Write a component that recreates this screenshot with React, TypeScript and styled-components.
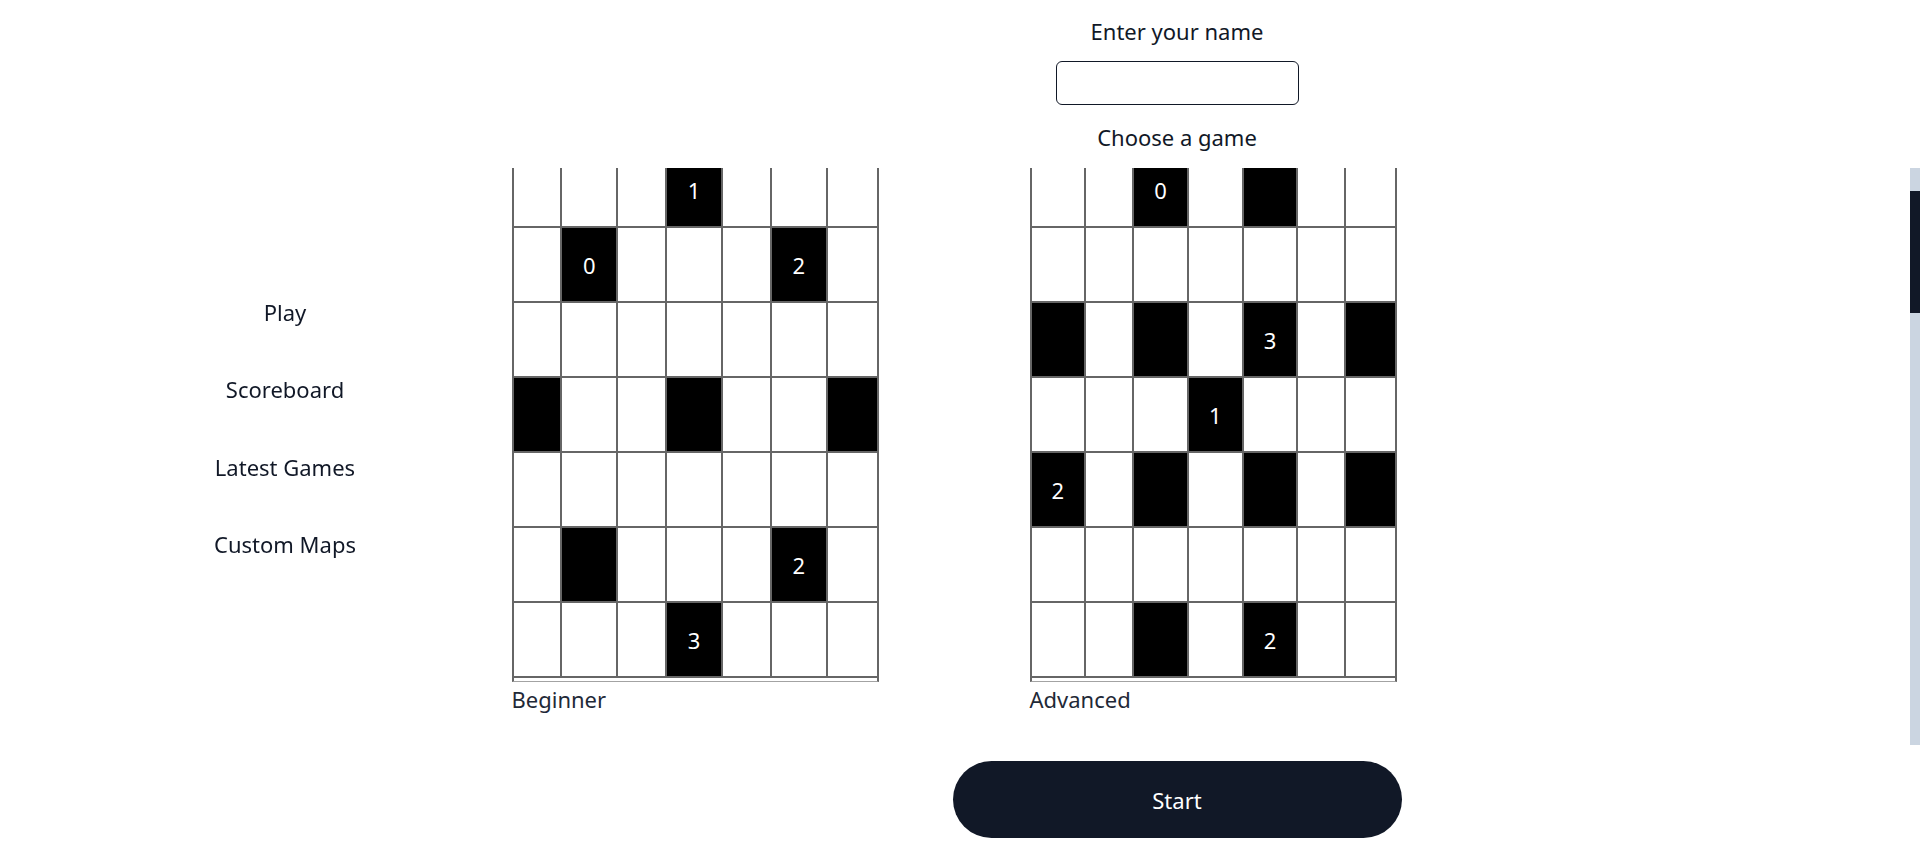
import React, { useCallback, useLayoutEffect, useRef, useState } from 'react';
import styled, { createGlobalStyle } from 'styled-components';

const GlobalStyle = createGlobalStyle`
  html, body {
    margin: 0;
    padding: 0;
    background: #ffffff;
    overflow: hidden;
  }
  body {
    font-family: "Noto Sans", "Open Sans", sans-serif;
    color: #111827;
  }
`;

// '.' = white cell, '#' = black cell, digit = black cell with a number
type GameMap = { name: string; rows: string[] };

const maps: GameMap[] = [
  {
    name: 'Beginner',
    rows: ['...1...', '.0...2.', '.......', '#..#..#', '.......', '.#...2.', '...3...'],
  },
  {
    name: 'Advanced',
    rows: ['..0.#..', '.......', '#.#.3.#', '...1...', '2.#.#.#', '.......', '..#.2..'],
  },
];

const TRACK_WIDTH = 10;

const Page = styled.div`
  display: flex;
  flex-direction: column;
`;

const Header = styled.header`
  display: flex;
  flex-direction: column;
  align-items: center;
  padding: 17px 0 0 434px;
`;

const Label = styled.div<{ $gap?: number }>`
  font-size: 22px;
  line-height: 28px;
  margin-top: ${(p) => p.$gap ?? 0}px;
`;

const NameInput = styled.input`
  box-sizing: border-box;
  width: 243px;
  height: 44px;
  margin-top: 16px;
  border: 1px solid #111827;
  border-radius: 6px;
  background: #ffffff;
  font-family: inherit;
  font-size: 18px;
  padding: 0 10px;
  outline: none;
`;

const ScrollArea = styled.div`
  position: relative;
  margin-top: 17px;
`;

const MapScroller = styled.div`
  height: 577px;
  overflow-y: auto;
  overflow-x: hidden;
  scrollbar-width: none;

  &::-webkit-scrollbar {
    display: none;
  }
`;

const Track = styled.div`
  position: absolute;
  top: 0;
  right: 0;
  bottom: 0;
  width: ${TRACK_WIDTH}px;
  background: #cbd5e1;
`;

const Thumb = styled.div`
  position: absolute;
  left: 0;
  width: 100%;
  background: #111827;
`;

const MapList = styled.div`
  display: grid;
  grid-template-columns: repeat(2, 367px);
  justify-content: center;
  column-gap: 151px;
  padding: 92px 12px 2078px 0;
`;

const MapCard = styled.div`
  display: flex;
  flex-direction: column;
  cursor: pointer;
`;

const Frame = styled.div`
  box-sizing: border-box;
  width: 367px;
  border: 2px solid #666666;
  border-bottom: 1px solid #a3a3a3;
  padding-bottom: 3px;
`;

const Board = styled.div<{ $columns: string }>`
  display: grid;
  grid-template-columns: ${(p) => p.$columns};
  grid-auto-rows: 75px;
`;

const Cell = styled.div<{ $black: boolean; $last: boolean }>`
  box-sizing: border-box;
  display: flex;
  align-items: center;
  justify-content: center;
  border-bottom: 2px solid #666666;
  border-right: ${(p) => (p.$last ? 'none' : '2px solid #666666')};
  background: ${(p) => (p.$black ? '#000000' : '#ffffff')};
  color: #ffffff;
  font-size: 22px;
`;

const MapName = styled.div`
  padding-top: 3px;
  font-size: 22px;
  line-height: 28px;
  color: #1f2937;
`;

const Footer = styled.footer`
  display: flex;
  justify-content: center;
  padding-left: 434px;
  margin-top: 16px;
`;

const StartButton = styled.button`
  width: 449px;
  height: 77px;
  border: none;
  border-radius: 9999px;
  background: #111827;
  color: #ffffff;
  font-family: inherit;
  font-size: 22px;
  cursor: pointer;
`;

const Sidebar = styled.nav`
  position: fixed;
  top: 0;
  left: 0;
  width: 570px;
  height: 100vh;
  padding-top: 6px;
  box-sizing: border-box;
  display: flex;
  flex-direction: column;
  justify-content: center;
  align-items: center;
  gap: 49.5px;
  z-index: 2;
`;

const NavItem = styled.a`
  font-size: 22px;
  line-height: 28px;
  color: #111827;
  text-decoration: none;
  cursor: pointer;
`;

const columnTemplate = (rows: string[]) =>
  rows[0]
    .split('')
    .map((_, c) => (rows.some((r) => /\d/.test(r[c])) ? '1.14fr' : '1fr'))
    .join(' ');

const MapBoard = ({ map }: { map: GameMap }) => (
  <MapCard>
    <Frame>
      <Board $columns={columnTemplate(map.rows)}>
        {map.rows.map((row, r) =>
          row.split('').map((ch, c) => (
            <Cell key={`${r}-${c}`} $black={ch !== '.'} $last={c === row.length - 1}>
              {/\d/.test(ch) ? ch : null}
            </Cell>
          ))
        )}
      </Board>
    </Frame>
    <MapName>{map.name}</MapName>
  </MapCard>
);

const App = () => {
  const scrollerRef = useRef<HTMLDivElement>(null);
  const [thumb, setThumb] = useState({ top: 0, height: 0 });

  const measure = useCallback(() => {
    const el = scrollerRef.current;
    if (!el) return;
    const track = el.clientHeight;
    const height = Math.max(20, (track * el.clientHeight) / el.scrollHeight);
    const range = el.scrollHeight - el.clientHeight;
    const top = range > 0 ? (el.scrollTop / range) * (track - height) : 0;
    setThumb({ top, height });
  }, []);

  useLayoutEffect(() => {
    if (scrollerRef.current) scrollerRef.current.scrollTop = 109;
    measure();
  }, [measure]);

  return (
    <>
      <GlobalStyle />
      <Sidebar>
        <NavItem>Play</NavItem>
        <NavItem>Scoreboard</NavItem>
        <NavItem>Latest Games</NavItem>
        <NavItem>Custom Maps</NavItem>
      </Sidebar>
      <Page>
        <Header>
          <Label>Enter your name</Label>
          <NameInput type="text" />
          <Label $gap={18}>Choose a game</Label>
        </Header>
        <ScrollArea>
          <MapScroller ref={scrollerRef} onScroll={measure}>
            <MapList>
              {maps.map((m) => (
                <MapBoard key={m.name} map={m} />
              ))}
            </MapList>
          </MapScroller>
          <Track>
            <Thumb style={{ top: thumb.top, height: thumb.height }} />
          </Track>
        </ScrollArea>
        <Footer>
          <StartButton>Start</StartButton>
        </Footer>
      </Page>
    </>
  );
};

export default App;
